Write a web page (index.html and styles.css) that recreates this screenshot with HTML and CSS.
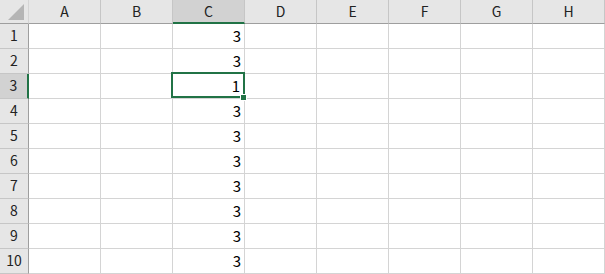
FILE: index.html
```html
<!DOCTYPE html>
<html lang="ja">
<head>
    <meta charset="UTF-8">
    <title>Sheet1</title>
    <link rel="stylesheet" href="styles.css">
</head>
<body>

    <!-- ワークシート -->
    <div class="sheet">
        <div class="corner"><span class="corner-tri"></span></div>
        <div class="col-head">A</div>
        <div class="col-head">B</div>
        <div class="col-head sel">C</div>
        <div class="col-head">D</div>
        <div class="col-head">E</div>
        <div class="col-head">F</div>
        <div class="col-head">G</div>
        <div class="col-head">H</div>

        <div class="row-head">1</div><div class="cell"></div><div class="cell"></div><div class="cell num">3</div><div class="cell"></div><div class="cell"></div><div class="cell"></div><div class="cell"></div><div class="cell"></div>
        <div class="row-head">2</div><div class="cell"></div><div class="cell"></div><div class="cell num">3</div><div class="cell"></div><div class="cell"></div><div class="cell"></div><div class="cell"></div><div class="cell"></div>
        <div class="row-head sel">3</div><div class="cell"></div><div class="cell"></div><div class="cell num active">1<span class="sel-box"></span><span class="fill-handle"></span></div><div class="cell"></div><div class="cell"></div><div class="cell"></div><div class="cell"></div><div class="cell"></div>
        <div class="row-head">4</div><div class="cell"></div><div class="cell"></div><div class="cell num">3</div><div class="cell"></div><div class="cell"></div><div class="cell"></div><div class="cell"></div><div class="cell"></div>
        <div class="row-head">5</div><div class="cell"></div><div class="cell"></div><div class="cell num">3</div><div class="cell"></div><div class="cell"></div><div class="cell"></div><div class="cell"></div><div class="cell"></div>
        <div class="row-head">6</div><div class="cell"></div><div class="cell"></div><div class="cell num">3</div><div class="cell"></div><div class="cell"></div><div class="cell"></div><div class="cell"></div><div class="cell"></div>
        <div class="row-head">7</div><div class="cell"></div><div class="cell"></div><div class="cell num">3</div><div class="cell"></div><div class="cell"></div><div class="cell"></div><div class="cell"></div><div class="cell"></div>
        <div class="row-head">8</div><div class="cell"></div><div class="cell"></div><div class="cell num">3</div><div class="cell"></div><div class="cell"></div><div class="cell"></div><div class="cell"></div><div class="cell"></div>
        <div class="row-head">9</div><div class="cell"></div><div class="cell"></div><div class="cell num">3</div><div class="cell"></div><div class="cell"></div><div class="cell"></div><div class="cell"></div><div class="cell"></div>
        <div class="row-head">10</div><div class="cell"></div><div class="cell"></div><div class="cell num">3</div><div class="cell"></div><div class="cell"></div><div class="cell"></div><div class="cell"></div><div class="cell"></div>
    </div>

</body>
</html>
```

FILE: styles.css
```css
body { margin: 0; background: #fff; font-family: "Noto Sans CJK JP", "Noto Sans", sans-serif; font-size: 15px; color: #000; }

/* シート全体 */
.sheet { display: grid; grid-template-columns: 29px repeat(8, 72px); grid-template-rows: 24px repeat(10, 25px); }
.sheet > div { box-sizing: border-box; border-right: 1px solid #d4d4d4; border-bottom: 1px solid #d4d4d4; }

/* 左上 */
.corner { position: relative; background: #e6e6e6; border-right-color: #d4d4d4 !important; border-bottom: 1px solid #9e9e9e !important; }
.corner-tri { position: absolute; right: 4px; bottom: 3px; width: 0; height: 0; border-left: 16px solid transparent; border-bottom: 16px solid #b5b5b5; }

/* 見出し */
.col-head { background: #e6e6e6; border-right-color: #c6c6c6 !important; border-bottom: 1px solid #9e9e9e !important; display: flex; align-items: center; justify-content: center; padding-bottom: 1px; color: #222; font-size: 14px; }
.col-head.sel { background: #d2d2d2; border-bottom: 2px solid #217346 !important; padding-bottom: 0; }
.row-head { background: #e6e6e6; border-right: 1px solid #9e9e9e !important; border-bottom-color: #c6c6c6 !important; display: flex; align-items: center; justify-content: center; padding-bottom: 2px; color: #222; font-size: 14px; }
.row-head.sel { background: #d2d2d2; border-right: 2px solid #217346 !important; }

/* セル */
.cell { display: flex; align-items: center; padding-bottom: 2px; }
.cell.num { justify-content: flex-end; padding-right: 3px; }
.cell.active { position: relative; padding-right: 4px; }
.sel-box { position: absolute; left: -2px; top: -2px; right: -1px; bottom: 0; border: 2px solid #217346; }
.fill-handle { position: absolute; right: -3px; bottom: -3px; width: 5px; height: 5px; background: #217346; border: 1px solid #fff; }
```
